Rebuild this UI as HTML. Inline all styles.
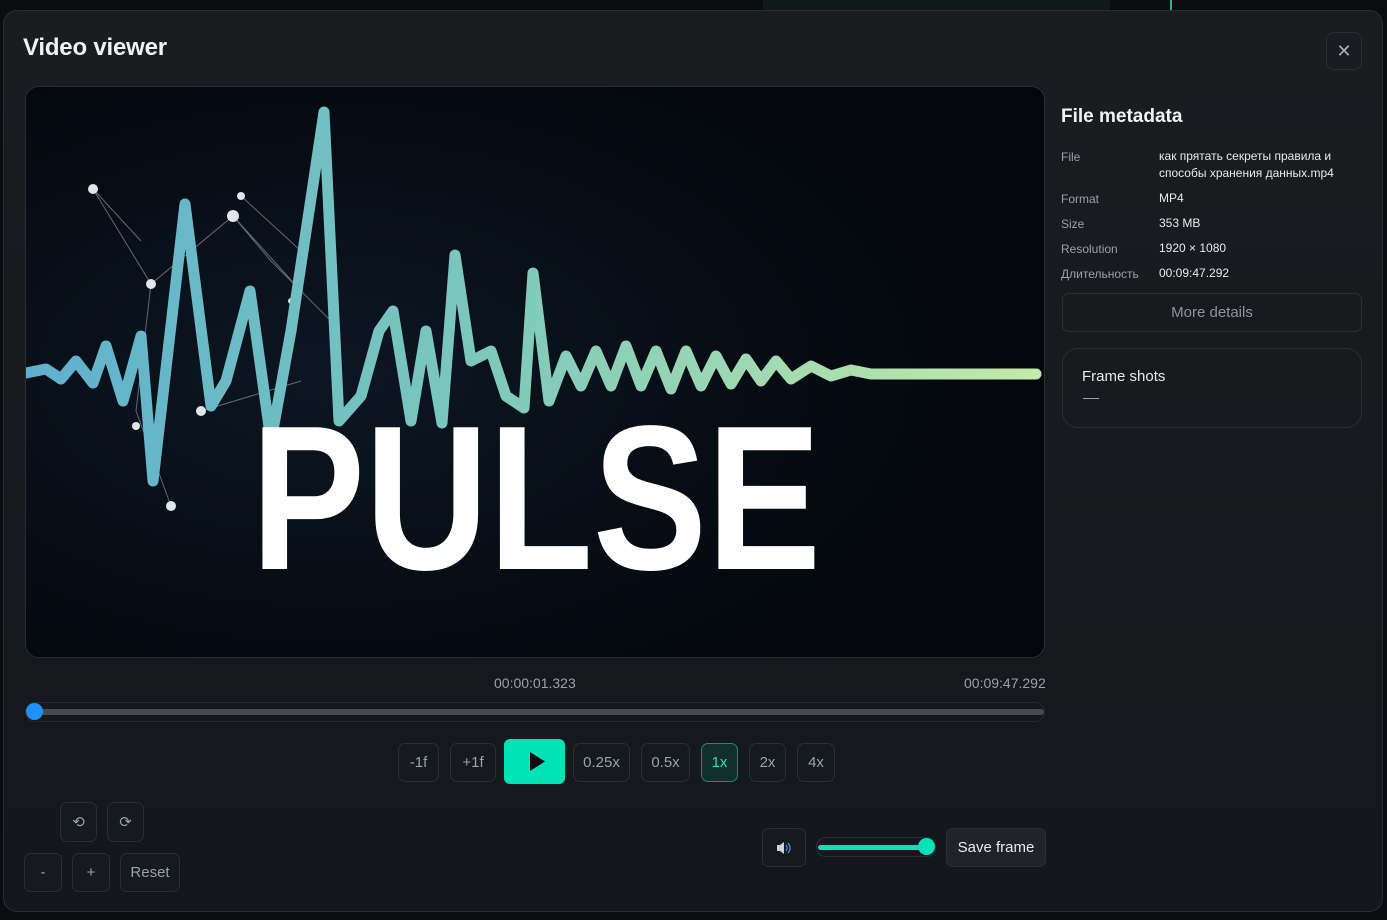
<!DOCTYPE html>
<html><head><meta charset="utf-8"><style>
*{box-sizing:border-box;margin:0;padding:0}
body{width:1387px;height:920px;background:#0b0c0e;font-family:"Liberation Sans",sans-serif;position:relative;overflow:hidden;color:#e6e8eb}
.modal{position:absolute;left:3px;top:10px;width:1380px;height:902px;background:linear-gradient(#1a1c20,#14171b);border:1px solid #2a2d32;border-radius:14px}
.a{position:absolute}
.btn{position:absolute;border:1px solid #2b2f35;border-radius:7px;background:#16191d;color:#9aa1aa;font-size:15px;display:flex;align-items:center;justify-content:center}
.lbl{position:absolute;left:1061px;font-size:12px;color:#9aa0a8}
.val{position:absolute;left:1159px;font-size:12px;color:#e8eaec;line-height:17px}
</style></head><body>
<div class="a" style="left:763px;top:0;width:347px;height:10px;background:#0d1a17"></div>
<div class="a" style="left:1170px;top:0;width:2px;height:10px;background:#1fb48a"></div>
<div class="modal"></div>
<div class="a" style="left:23px;top:34px;font-size:24px;font-weight:bold;color:#f1f2f4;letter-spacing:-0.2px">Video viewer</div>
<div class="btn" style="left:1326px;top:32px;width:36px;height:38px;border-radius:8px;background:transparent;font-size:18px;color:#aab">✕</div>

<div class="a" style="left:25px;top:86px;width:1020px;height:572px;border-radius:14px;overflow:hidden;background:#050a12;border:1px solid #2a2e34">
<svg width="1020" height="572" viewBox="25 86 1020 572">
<defs><linearGradient id="g" x1="0" x2="1"><stop offset="0" stop-color="#5fb0cf"/><stop offset="0.45" stop-color="#7cc8bb"/><stop offset="1" stop-color="#c3eaa8"/></linearGradient>
<radialGradient id="bg" cx="0.3" cy="0.5" r="0.7"><stop offset="0" stop-color="#0c1622"/><stop offset="1" stop-color="#03060b"/></radialGradient></defs>
<rect x="25" y="86" width="1020" height="572" fill="url(#bg)"/>
<g stroke="#b9c4cc" stroke-width="1" opacity="0.5" fill="none">
<path d="M92 188 L150 283 L232 215 L300 290 M232 215 L270 260 L330 320 M150 283 L135 410 L170 505 M200 410 L300 380 M92 188 L140 240 M240 195 L300 250"/>
</g>
<g fill="#dfe6ea">
<circle cx="92" cy="188" r="5"/><circle cx="232" cy="215" r="6"/><circle cx="150" cy="283" r="5"/><circle cx="200" cy="410" r="5"/><circle cx="170" cy="505" r="5"/><circle cx="135" cy="425" r="4"/><circle cx="240" cy="195" r="4"/><circle cx="290" cy="300" r="3"/>
</g>
<polyline fill="none" stroke="url(#g)" stroke-width="11" stroke-linejoin="round" stroke-linecap="round" points="25,372 45,368 60,378 75,360 92,382 105,345 122,400 140,335 152,480 184,203 210,405 225,380 249,290 270,440 290,330 323,111 338,420 360,395 378,330 392,310 410,420 425,330 441,422 454,254 470,360 490,350 505,395 523,407 532,272 548,400 565,355 580,385 595,350 610,385 625,345 640,385 655,350 670,388 685,350 700,385 715,355 730,383 745,358 760,380 775,360 790,378 810,365 830,375 850,369 870,373 1035,373"/>
<text x="250" y="568" font-family="Liberation Sans" font-weight="bold" font-size="206" fill="#fff" textLength="570" lengthAdjust="spacingAndGlyphs">PULSE</text>
</svg></div>

<div class="a" style="left:494px;top:675px;font-size:14px;color:#9aa1aa">00:00:01.323</div>
<div class="a" style="left:964px;top:675px;font-size:14px;color:#9aa1aa">00:09:47.292</div>
<div class="a" style="left:25px;top:702px;width:1020px;height:20px;border:1px solid #24282d;border-radius:10px"></div>
<div class="a" style="left:30px;top:709px;width:1014px;height:6px;background:#474a4f;border-radius:3px"></div>
<div class="a" style="left:26px;top:703px;width:17px;height:17px;background:#1e90ff;border-radius:50%"></div>

<div class="btn" style="left:398px;top:743px;width:41px;height:39px">-1f</div>
<div class="btn" style="left:450px;top:743px;width:46px;height:39px">+1f</div>
<div class="a" style="left:504px;top:739px;width:61px;height:45px;background:#00e3b8;border-radius:6px"><svg width="61" height="45"><path d="M26 13 L26 32 L41 22.5Z" fill="#0b0e10"/></svg></div>
<div class="btn" style="left:573px;top:743px;width:57px;height:39px">0.25x</div>
<div class="btn" style="left:641px;top:743px;width:49px;height:39px">0.5x</div>
<div class="btn" style="left:701px;top:743px;width:37px;height:39px;background:#12302b;border-color:#1e8a6e;color:#20e0b5">1x</div>
<div class="btn" style="left:749px;top:743px;width:37px;height:39px">2x</div>
<div class="btn" style="left:797px;top:743px;width:38px;height:39px">4x</div>

<div class="btn" style="left:60px;top:802px;width:37px;height:40px">⟲</div>
<div class="btn" style="left:107px;top:802px;width:37px;height:40px">⟳</div>
<div class="btn" style="left:24px;top:853px;width:38px;height:39px">-</div>
<div class="btn" style="left:72px;top:853px;width:38px;height:39px">+</div>
<div class="btn" style="left:120px;top:853px;width:60px;height:39px">Reset</div>

<div class="btn" style="left:762px;top:828px;width:44px;height:39px"><svg width="20" height="16"><path d="M3 5h3l4-3v12l-4-3H3z" fill="#cfd3d8"/><path d="M12 5q2 3 0 6M14 3q4 5 0 10" stroke="#3b8ef0" stroke-width="1.3" fill="none"/></svg></div>
<div class="a" style="left:816px;top:837px;width:120px;height:20px;border:1px solid #2a2e33;border-radius:10px"></div>
<div class="a" style="left:818px;top:845px;width:110px;height:5px;background:#00e3b8;border-radius:3px"></div>
<div class="a" style="left:918px;top:838px;width:17px;height:17px;background:#00e3b8;border-radius:50%"></div>
<div class="btn" style="left:946px;top:828px;width:100px;height:39px;background:#202328;color:#e8eaec;font-size:15px">Save frame</div>

<div class="a" style="left:1061px;top:106px;font-size:19px;font-weight:bold;color:#f1f2f4">File metadata</div>
<div class="lbl" style="top:150px">File</div>
<div class="val" style="top:148px">как прятать секреты правила и<br>способы хранения данных.mp4</div>
<div class="lbl" style="top:192px">Format</div><div class="val" style="top:190px">MP4</div>
<div class="lbl" style="top:217px">Size</div><div class="val" style="top:215px">353 MB</div>
<div class="lbl" style="top:242px">Resolution</div><div class="val" style="top:240px">1920 × 1080</div>
<div class="lbl" style="top:267px">Длительность</div><div class="val" style="top:265px">00:09:47.292</div>
<div class="btn" style="left:1062px;top:293px;width:300px;height:39px;background:transparent;font-size:15px;color:#8d949c">More details</div>
<div class="a" style="left:1062px;top:348px;width:300px;height:80px;border:1px solid #2a2e33;border-radius:16px"></div>
<div class="a" style="left:1082px;top:368px;font-size:15px;color:#e8eaec">Frame shots</div>
<div class="a" style="left:1083px;top:398px;width:16px;height:1px;background:#9aa0a8"></div>
</body></html>
